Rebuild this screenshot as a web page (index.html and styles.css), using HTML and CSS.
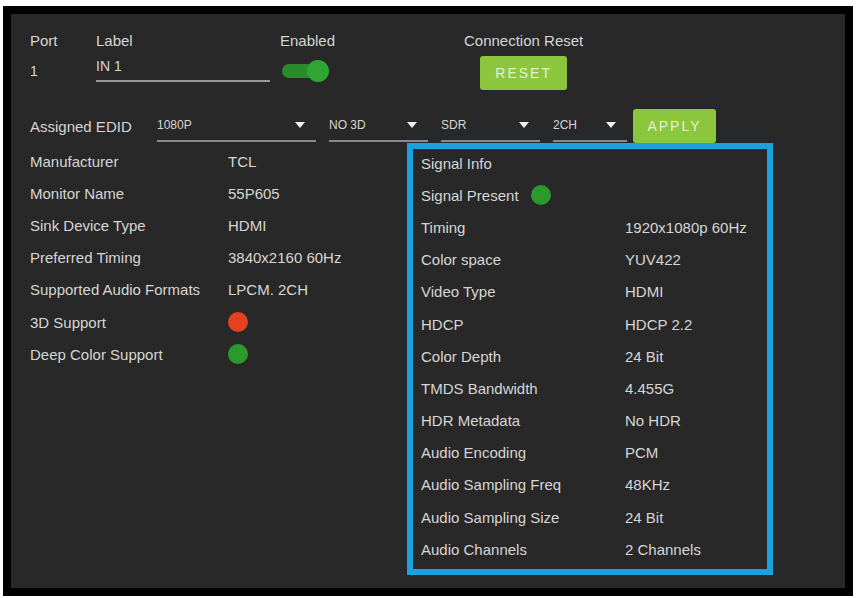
FILE: index.html
```html
<!DOCTYPE html>
<html lang="en">
<head>
    <meta charset="UTF-8">
    <meta name="viewport" content="width=device-width, initial-scale=1.0">
    <title>Port Settings</title>
    <link rel="stylesheet" href="styles.css">
</head>
<body>

<div class="frame">
    <!-- Port / label / enable / reset -->
    <div class="top-row">
        <div class="col col-port">
            <div class="head">Port</div>
            <div class="port-num">1</div>
        </div>
        <div class="col col-label">
            <div class="head">Label</div>
            <div class="label-field">IN 1</div>
        </div>
        <div class="col col-enabled">
            <div class="head">Enabled</div>
            <div class="toggle"><span class="knob"></span></div>
        </div>
        <div class="col col-reset">
            <div class="head">Connection Reset</div>
            <button class="green-button reset-button">RESET</button>
        </div>
    </div>

    <!-- EDID selection -->
    <div class="edid-row">
        <div class="edid-label">Assigned EDID</div>
        <div class="select select-wide"><span>1080P</span><span class="arrow"></span></div>
        <div class="select select-mid"><span>NO 3D</span><span class="arrow"></span></div>
        <div class="select select-mid"><span>SDR</span><span class="arrow"></span></div>
        <div class="select select-small"><span>2CH</span><span class="arrow"></span></div>
        <button class="green-button apply-button">APPLY</button>
    </div>

    <div class="body-row">
        <!-- Sink info -->
        <div class="sink-info">
            <div class="info-row"><span class="sink-label">Manufacturer</span><span>TCL</span></div>
            <div class="info-row"><span class="sink-label">Monitor Name</span><span>55P605</span></div>
            <div class="info-row"><span class="sink-label">Sink Device Type</span><span>HDMI</span></div>
            <div class="info-row"><span class="sink-label">Preferred Timing</span><span>3840x2160 60Hz</span></div>
            <div class="info-row"><span class="sink-label">Supported Audio Formats</span><span>LPCM. 2CH</span></div>
            <div class="info-row"><span class="sink-label">3D Support</span><span class="dot dot-red"></span></div>
            <div class="info-row"><span class="sink-label">Deep Color Support</span><span class="dot dot-green"></span></div>
        </div>

        <!-- Signal info -->
        <div class="signal-box">
            <div class="signal-list">
                <div class="info-row"><span>Signal Info</span></div>
                <div class="info-row"><span>Signal Present</span><span class="dot dot-green present-dot"></span></div>
                <div class="info-row"><span class="signal-label">Timing</span><span>1920x1080p 60Hz</span></div>
                <div class="info-row"><span class="signal-label">Color space</span><span>YUV422</span></div>
                <div class="info-row"><span class="signal-label">Video Type</span><span>HDMI</span></div>
                <div class="info-row"><span class="signal-label">HDCP</span><span>HDCP 2.2</span></div>
                <div class="info-row"><span class="signal-label">Color Depth</span><span>24 Bit</span></div>
                <div class="info-row"><span class="signal-label">TMDS Bandwidth</span><span>4.455G</span></div>
                <div class="info-row"><span class="signal-label">HDR Metadata</span><span>No HDR</span></div>
                <div class="info-row"><span class="signal-label">Audio Encoding</span><span>PCM</span></div>
                <div class="info-row"><span class="signal-label">Audio Sampling Freq</span><span>48KHz</span></div>
                <div class="info-row"><span class="signal-label">Audio Sampling Size</span><span>24 Bit</span></div>
                <div class="info-row"><span class="signal-label">Audio Channels</span><span>2 Channels</span></div>
            </div>
        </div>
    </div>
</div>

</body>
</html>
```

FILE: styles.css
```css
body {
    margin: 0;
    padding: 6px 0 0 3px;
    background-color: #fff;
    font-family: "Liberation Sans", Arial, sans-serif;
    font-size: 15px;
    color: #d6d6d6;
}

.frame {
    box-sizing: border-box;
    width: 850px;
    height: 590px;
    border: 8px solid #000;
    background-color: #282828;
    padding-left: 19px;
}

/* top row */
.top-row {
    display: flex;
    padding-top: 18px;
}

.col {
    display: flex;
    flex-direction: column;
}

.head {
    line-height: 18px;
}

.col-port {
    width: 66px;
}

.col-label {
    width: 184px;
}

.col-enabled {
    width: 184px;
}

.col-reset {
    align-items: center;
}

.port-num {
    margin-top: 12px;
    line-height: 18px;
    font-size: 14px;
}

.label-field {
    box-sizing: border-box;
    width: 174px;
    height: 32px;
    padding-top: 8px;
    line-height: 16px;
    font-size: 14px;
    border-bottom: 2px solid #9a9a9a;
}

.toggle {
    position: relative;
    width: 37px;
    height: 14px;
    margin: 14px 0 0 2px;
    border-radius: 7px;
    background-color: #2a8a2c;
}

.knob {
    position: absolute;
    left: 25px;
    top: -4px;
    width: 22px;
    height: 22px;
    border-radius: 50%;
    background-color: #2fa532;
}

.green-button {
    border: none;
    border-radius: 3px;
    background-color: #8cc63f;
    color: #e2f4cc;
    font-family: "Liberation Sans", Arial, sans-serif;
    font-size: 14px;
    letter-spacing: 2px;
    padding: 0;
    cursor: pointer;
}

.reset-button {
    width: 87px;
    height: 34px;
    margin-top: 6px;
}

/* EDID row */
.edid-row {
    display: flex;
    align-items: center;
    height: 34px;
    margin-top: 19px;
}

.edid-label {
    width: 127px;
}

.select {
    box-sizing: border-box;
    display: flex;
    align-items: center;
    justify-content: space-between;
    height: 33px;
    margin-right: 13px;
    padding-right: 11px;
    font-size: 12px;
    border-bottom: 2px solid #8a8a8a;
    align-self: flex-start;
}

.select-wide {
    width: 159px;
}

.select-mid {
    width: 99px;
}

.select-small {
    width: 74px;
    margin-right: 6px;
}

.arrow {
    width: 0;
    height: 0;
    border-left: 5px solid transparent;
    border-right: 5px solid transparent;
    border-top: 6px solid #eee;
}

.apply-button {
    width: 83px;
    height: 34px;
}

/* lists */
.body-row {
    display: flex;
    align-items: flex-start;
}

.sink-info {
    width: 377px;
    padding-top: 2px;
}

.info-row {
    display: flex;
    align-items: center;
    height: 32.2px;
}

.sink-label {
    width: 198px;
}

.signal-box {
    box-sizing: border-box;
    width: 366px;
    height: 432px;
    border: 6px solid #1ba1dd;
    padding-left: 8px;
}

.signal-list {
    margin-top: -2px;
}

.signal-label {
    width: 204px;
}

.dot {
    display: inline-block;
    width: 20px;
    height: 20px;
    border-radius: 50%;
}

.dot-red {
    background-color: #e5401f;
}

.dot-green {
    background-color: #2a9a2c;
}

.present-dot {
    margin-left: 12px;
}
```
